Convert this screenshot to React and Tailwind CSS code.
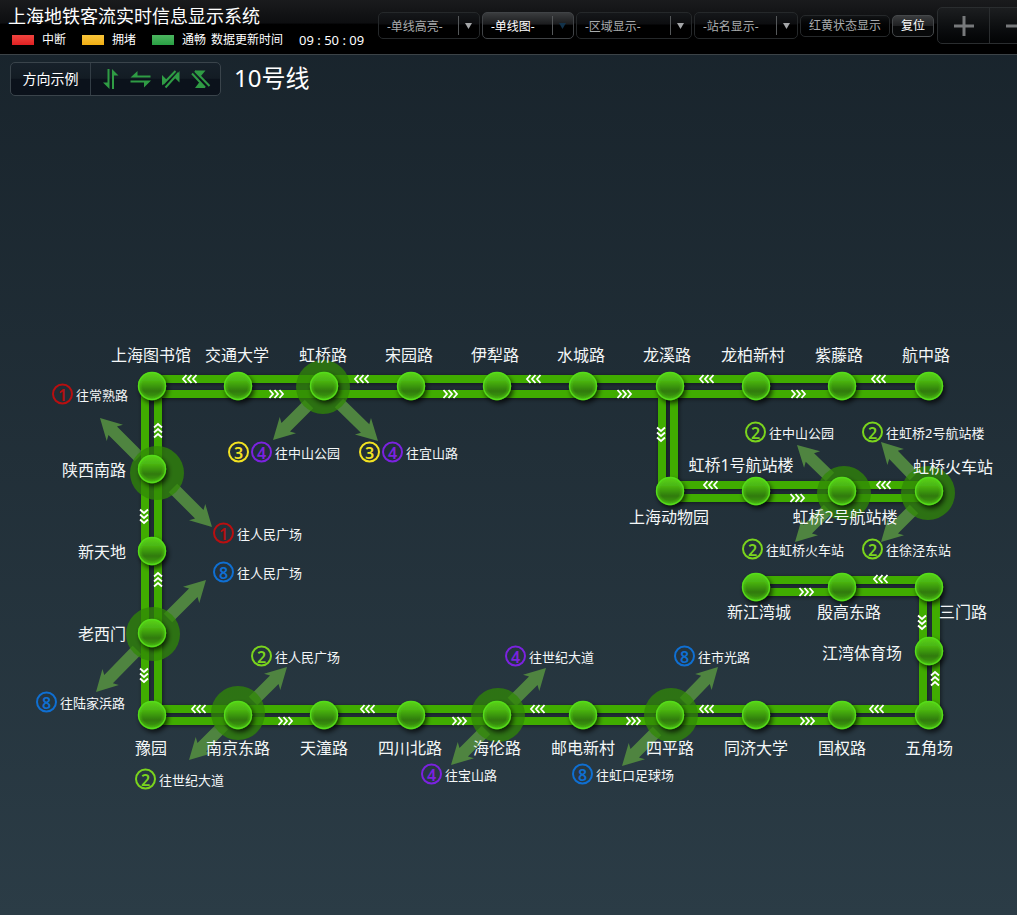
import clsx from 'clsx';

const MAP_WIDTH = 1017;
const MAP_HEIGHT = 815;

const lineColors = {
  1: 'border-[#b80f10] text-[#b80f10]',
  2: 'border-[#7ad41d] text-[#7ad41d]',
  3: 'border-[#f2e222] text-[#f2e222]',
  4: 'border-[#7b22e0] text-[#7b22e0]',
  8: 'border-[#0f6fd2] text-[#0f6fd2]',
};

const legend = [
  { label: '中断', color: 'from-[#f0443f] to-[#e01f22]' },
  { label: '拥堵', color: 'from-[#f8c53a] to-[#f0ae10]' },
  { label: '通畅', color: 'from-[#4cb560] to-[#28a043]' },
];

const filters = [
  { label: '-单线高亮-', width: 'w-[102px]' },
  { label: '-单线图-', width: 'w-[92px]', active: true },
  { label: '-区域显示-', width: 'w-[116px]' },
  { label: '-站名显示-', width: 'w-[104px]' },
];

// x / y is the station itself, lx / ly is the middle of its name
const stations = [
  { name: '上海图书馆', x: 152, y: 286, lx: 151, ly: 255 },
  { name: '交通大学', x: 238, y: 286, lx: 237, ly: 255 },
  { name: '虹桥路', x: 324, y: 286, lx: 323, ly: 255 },
  { name: '宋园路', x: 411, y: 286, lx: 409, ly: 255 },
  { name: '伊犁路', x: 497, y: 286, lx: 495, ly: 255 },
  { name: '水城路', x: 583, y: 286, lx: 581, ly: 255 },
  { name: '龙溪路', x: 670, y: 286, lx: 667, ly: 255 },
  { name: '龙柏新村', x: 756, y: 286, lx: 753, ly: 255 },
  { name: '紫藤路', x: 842, y: 286, lx: 839, ly: 255 },
  { name: '航中路', x: 929, y: 286, lx: 926, ly: 255 },
  { name: '陕西南路', x: 152, y: 369, lx: 94, ly: 370 },
  { name: '新天地', x: 152, y: 451, lx: 102, ly: 452 },
  { name: '老西门', x: 152, y: 533, lx: 102, ly: 534 },
  { name: '豫园', x: 152, y: 615, lx: 151, ly: 648 },
  { name: '南京东路', x: 238, y: 615, lx: 238, ly: 648 },
  { name: '天潼路', x: 324, y: 615, lx: 324, ly: 648 },
  { name: '四川北路', x: 411, y: 615, lx: 410, ly: 648 },
  { name: '海伦路', x: 497, y: 615, lx: 497, ly: 648 },
  { name: '邮电新村', x: 583, y: 615, lx: 583, ly: 648 },
  { name: '四平路', x: 670, y: 615, lx: 670, ly: 648 },
  { name: '同济大学', x: 756, y: 615, lx: 756, ly: 648 },
  { name: '国权路', x: 842, y: 615, lx: 842, ly: 648 },
  { name: '五角场', x: 929, y: 615, lx: 929, ly: 648 },
  { name: '江湾体育场', x: 929, y: 551, lx: 862, ly: 553 },
  { name: '三门路', x: 929, y: 487, lx: 963, ly: 512 },
  { name: '殷高东路', x: 842, y: 487, lx: 849, ly: 512 },
  { name: '新江湾城', x: 756, y: 487, lx: 759, ly: 512 },
  { name: '上海动物园', x: 670, y: 391, lx: 669, ly: 417 },
  { name: '虹桥1号航站楼', x: 756, y: 391, lx: 741, ly: 365 },
  { name: '虹桥2号航站楼', x: 842, y: 391, lx: 845, ly: 417 },
  { name: '虹桥火车站', x: 929, y: 391, lx: 953, ly: 367 },
];

const transfers = [
  { lines: [1], to: '往常熟路', x: 62, y: 294 },
  { lines: [3, 4], to: '往中山公园', x: 238, y: 352 },
  { lines: [3, 4], to: '往宜山路', x: 369, y: 352 },
  { lines: [1], to: '往人民广场', x: 223, y: 433 },
  { lines: [8], to: '往人民广场', x: 223, y: 472 },
  { lines: [8], to: '往陆家浜路', x: 46, y: 602 },
  { lines: [2], to: '往世纪大道', x: 145, y: 679 },
  { lines: [2], to: '往人民广场', x: 261, y: 556 },
  { lines: [4], to: '往世纪大道', x: 515, y: 556 },
  { lines: [4], to: '往宝山路', x: 431, y: 674 },
  { lines: [8], to: '往市光路', x: 684, y: 556 },
  { lines: [8], to: '往虹口足球场', x: 582, y: 674 },
  { lines: [2], to: '往中山公园', x: 755, y: 332 },
  { lines: [2], to: '往虹桥2号航站楼', x: 872, y: 332 },
  { lines: [2], to: '往虹桥火车站', x: 752, y: 449 },
  { lines: [2], to: '往徐泾东站', x: 872, y: 449 },
];

const tracks = [
  'M151 279H929M151 294H929',
  'M145 286V614M158 286V614',
  'M151 609H929M151 621H929',
  'M662 286V391M674 286V391',
  'M670 385H929M670 398H929',
  'M756 480H929M756 492H929',
  'M923 487V614M936 487V614',
];

const halos = [
  [157, 373],
  [323, 287],
  [844, 393],
  [928, 393],
  [153, 534],
  [238, 613],
  [498, 615],
  [671, 615],
];

// tip x, tip y, tail x, tail y
const arrows = [
  [100, 318, 139, 357],
  [212, 427, 173, 388],
  [273, 340, 309, 304],
  [378, 341, 339, 303],
  [797, 345, 830, 377],
  [795, 442, 828, 409],
  [881, 342, 914, 376],
  [881, 442, 914, 409],
  [206, 480, 168, 518],
  [96, 592, 137, 550],
  [287, 567, 253, 601],
  [189, 660, 224, 625],
  [546, 568, 512, 602],
  [451, 665, 486, 630],
  [718, 567, 684, 602],
  [622, 666, 657, 631],
];

// x, y, rotation
const chevrons = [
  ...[190, 362, 534, 707, 879].map((x) => [x, 279, 180]),
  ...[276, 450, 624, 798].map((x) => [x, 294, 0]),
  ...[199, 368, 538, 707, 877].map((x) => [x, 609, 180]),
  ...[285, 459, 633, 807].map((x) => [x, 621, 0]),
  [711, 385, 180],
  [884, 385, 180],
  [797, 398, 0],
  [881, 479, 180],
  [806, 492, 0],
  [158, 331, -90],
  [144, 416, 90],
  [158, 480, -90],
  [144, 575, 90],
  [661, 334, 90],
  [922, 522, 90],
  [935, 579, -90],
];

function FilterSelect({ label, width, active }) {
  return (
    <div
      className={clsx(
        'relative h-[27px] shrink-0 rounded-[5px] border',
        width,
        active
          ? 'border-[#404346] bg-linear-to-b from-[#3a3c3e] from-0% via-[#1b1c1e] via-45% to-black to-50%'
          : 'border-[#25282a] bg-linear-to-b from-[#15171a] from-0% via-[#0c0d0f] via-45% to-black to-50%'
      )}
    >
      <select
        aria-label={label}
        className={clsx(
          'h-full w-full appearance-none bg-transparent pl-2 text-xs outline-none',
          active ? 'text-white' : 'text-[#a9abad]'
        )}
      >
        <option>{label}</option>
      </select>
      <span className="pointer-events-none absolute top-[3px] right-5 h-[19px] w-px bg-[#55585a]" />
      <svg
        className={clsx(
          'pointer-events-none absolute top-[10px] right-[7px] h-[6px] w-[7px]',
          active ? 'fill-[#12324a]' : 'fill-[#a4a6a8]'
        )}
        viewBox="0 0 7 6"
      >
        <path d="M0 0H7L3.5 6Z" />
      </svg>
    </div>
  );
}

function Header() {
  return (
    <header className="flex h-[55px] items-start overflow-hidden border-b border-[#3c4347] bg-linear-to-b from-[#1a1b1d] from-0% via-[#0d0e10] via-43% to-black to-46% text-white">
      <div className="w-[378px] shrink-0 pt-1 pl-[8px]">
        <h1 className="text-lg leading-6 whitespace-nowrap">
          上海地铁客流实时信息显示系统
        </h1>
        <div className="flex items-center pl-1 text-xs leading-6 whitespace-nowrap">
          {legend.map(({ label, color }) => (
            <span key={label} className="flex w-[70px] items-center gap-2">
              <i className={clsx('h-[10px] w-[22px] bg-linear-to-b', color)} />
              {label}
            </span>
          ))}
          <span className="-ml-[11px]">数据更新时间</span>
          <time className="ml-4 font-['Noto_Sans'] text-[13px] leading-5">
            09 : 50 : 09
          </time>
        </div>
      </div>
      <div className="flex shrink-0 items-center gap-0.5 pt-[7px]">
        {filters.map((filter) => (
          <FilterSelect key={filter.label} {...filter} />
        ))}
        <button className="h-[22px] w-[90px] shrink-0 rounded-[5px] border border-[#25282a] bg-linear-to-b from-[#111315] to-black text-xs whitespace-nowrap text-[#a9abad]">
          红黄状态显示
        </button>
        <button className="h-[22px] w-[42px] shrink-0 rounded-[5px] border border-[#45484a] bg-linear-to-b from-[#3a3c3e] from-0% via-[#202123] via-48% to-[#08090a] to-52% text-xs text-white">
          复位
        </button>
        <div className="ml-px flex h-[37px] shrink-0 overflow-hidden rounded-[5px] border border-[#2a2d2f] bg-linear-to-b from-[#1c1e20] to-[#030405]">
          <button
            aria-label="放大"
            className="flex w-[52px] items-center justify-center border-r border-[#2a2d2f]"
          >
            <svg width="20" height="20" viewBox="0 0 20 20" fill="#77797b">
              <path d="M8.5 0h3v8.5H20v3h-8.5V20h-3v-8.5H0v-3h8.5z" />
            </svg>
          </button>
          <button
            aria-label="缩小"
            className="flex w-[52px] items-center justify-center"
          >
            <svg width="20" height="20" viewBox="0 0 20 20" fill="#77797b">
              <path d="M0 8.5h20v3H0z" />
            </svg>
          </button>
        </div>
      </div>
    </header>
  );
}

function DirectionIcon({ children }) {
  return (
    <svg width="22" height="20" viewBox="0 0 22 20" fill="#2f9c44">
      {children}
    </svg>
  );
}

function Toolbar() {
  return (
    <div className="flex h-[45px] items-start gap-[13px] pt-[7px] pl-[10px] text-white">
      <div className="flex h-[34px] w-[211px] items-center rounded-[5px] border border-[#3a444b] bg-linear-to-b from-[#17212a] from-0% via-[#131c24] via-48% to-[#0b121b] to-50%">
        <span className="flex h-full w-[80px] items-center justify-center border-r border-[#333d45] text-sm">
          方向示例
        </span>
        <div className="flex flex-1 items-center justify-center gap-2">
          <DirectionIcon>
            <path d="M7.5 0H9.5V20L3 13.5H7.5ZM12 20V0L18.5 6.5H14V20Z" />
          </DirectionIcon>
          <DirectionIcon>
            <path d="M.5 8.5L7.5 2V6.5H20.5V8.5ZM.5 11.5H21L14 18.5V13.5H.5Z" />
          </DirectionIcon>
          <DirectionIcon>
            <path
              d="M15.5 2L3 15M5.5 18.5L18.5 4"
              stroke="#2f9c44"
              strokeWidth="2"
            />
            <path d="M2 6V16.5L7 11ZM19.5 2V13.5L14.5 8.5Z" />
          </DirectionIcon>
          <DirectionIcon>
            <path
              d="M5 2L19.5 17M2 4.5L15 18.5"
              stroke="#2f9c44"
              strokeWidth="2"
            />
            <path d="M5 1.5H15.5L10.5 7.5ZM5 19H15.5L9.5 13Z" />
          </DirectionIcon>
        </div>
      </div>
      <h2 className="text-2xl leading-8">10号线</h2>
    </div>
  );
}

function Arrow({ tip, tail }) {
  const dx = tail[0] - tip[0];
  const dy = tail[1] - tip[1];
  const length = Math.hypot(dx, dy);
  const angle = (Math.atan2(dy, dx) * 180) / Math.PI;

  return (
    <path
      d={`M0 0L21 -11.5L18 -6H${length}V6H18L21 11.5Z`}
      transform={`translate(${tip[0]} ${tip[1]}) rotate(${angle})`}
    />
  );
}

function LineDrawing() {
  return (
    <svg
      className="absolute inset-0"
      width={MAP_WIDTH}
      height={MAP_HEIGHT}
      viewBox={`0 0 ${MAP_WIDTH} ${MAP_HEIGHT}`}
    >
      <defs>
        <linearGradient id="ball" x1="0" y1="0" x2="0" y2="1">
          <stop offset="0" stopColor="#5ad01c" />
          <stop offset="0.3" stopColor="#4bb812" />
          <stop offset="0.5" stopColor="#3c980c" />
          <stop offset="0.68" stopColor="#307a09" />
          <stop offset="1" stopColor="#3fa610" />
        </linearGradient>
        <radialGradient id="ballRim">
          <stop offset="0.7" stopColor="#52d018" stopOpacity="0" />
          <stop offset="1" stopColor="#52d018" stopOpacity="0.6" />
        </radialGradient>
        <filter id="ballShadow" x="-50%" y="-50%" width="200%" height="200%">
          <feDropShadow
            dx="2"
            dy="3"
            stdDeviation="2.5"
            floodColor="#000"
            floodOpacity="0.7"
          />
        </filter>
        <filter
          id="trackShadow"
          filterUnits="userSpaceOnUse"
          x="0"
          y="0"
          width={MAP_WIDTH}
          height={MAP_HEIGHT}
        >
          <feDropShadow
            dx="1"
            dy="1"
            stdDeviation="2"
            floodColor="#000"
            floodOpacity="0.5"
          />
        </filter>
      </defs>

      <g fill="#4f8440">
        {arrows.map(([x, y, tx, ty]) => (
          <Arrow key={`${x}-${y}`} tip={[x, y]} tail={[tx, ty]} />
        ))}
      </g>

      <g stroke="#3fac03" strokeWidth="8" filter="url(#trackShadow)">
        {tracks.map((d) => (
          <path key={d} d={d} />
        ))}
      </g>

      <g fill="#318806" fillOpacity="0.74">
        {halos.map(([x, y]) => (
          <circle key={`${x}-${y}`} cx={x} cy={y} r="27" />
        ))}
      </g>

      <g fill="none" stroke="#fff" strokeWidth="1.8">
        {chevrons.map(([x, y, angle]) => (
          <path
            key={`${x}-${y}`}
            d="M-6.5 -4L-3 0L-6.5 4M-1.5 -4L2 0L-1.5 4M3.5 -4L7 0L3.5 4"
            transform={`translate(${x} ${y}) rotate(${angle})`}
          />
        ))}
      </g>

      {stations.map(({ name, x, y }) => (
        <g key={name} filter="url(#ballShadow)">
          <circle cx={x} cy={y} r="14" fill="url(#ball)" />
          <circle
            cx={x}
            cy={y}
            r="13.5"
            fill="url(#ballRim)"
            stroke="#55dc1a"
            strokeWidth="1.3"
          />
        </g>
      ))}
    </svg>
  );
}

function Transfer({ lines, to, x, y }) {
  return (
    <div
      className="absolute flex -translate-y-1/2 items-center gap-0.5 text-[13px] leading-5 whitespace-nowrap"
      style={{ left: x - 10, top: y }}
    >
      {lines.map((line) => (
        <span
          key={line}
          className={clsx(
            "flex h-[21px] w-[21px] items-center justify-center rounded-full border-2 font-['Noto_Sans'] text-base leading-4 font-semibold",
            lineColors[line]
          )}
        >
          {line}
        </span>
      ))}
      <span className="pl-px">{to}</span>
    </div>
  );
}

function LineMap() {
  return (
    <main
      className="relative text-[#f4f7f8]"
      style={{ width: MAP_WIDTH, height: MAP_HEIGHT }}
    >
      <LineDrawing />
      {stations.map(({ name, lx, ly }) => (
        <span
          key={name}
          className="absolute -translate-1/2 text-base leading-6 whitespace-nowrap"
          style={{ left: lx, top: ly }}
        >
          {name}
        </span>
      ))}
      {transfers.map((transfer) => (
        <Transfer key={`${transfer.x}-${transfer.y}`} {...transfer} />
      ))}
    </main>
  );
}

export default function App() {
  return (
    <div className="min-h-screen overflow-hidden bg-linear-to-b from-[#18232b] to-[#2b3c46] font-['Noto_Sans','Noto_Sans_CJK_SC',sans-serif]">
      <Header />
      <Toolbar />
      <LineMap />
    </div>
  );
}
